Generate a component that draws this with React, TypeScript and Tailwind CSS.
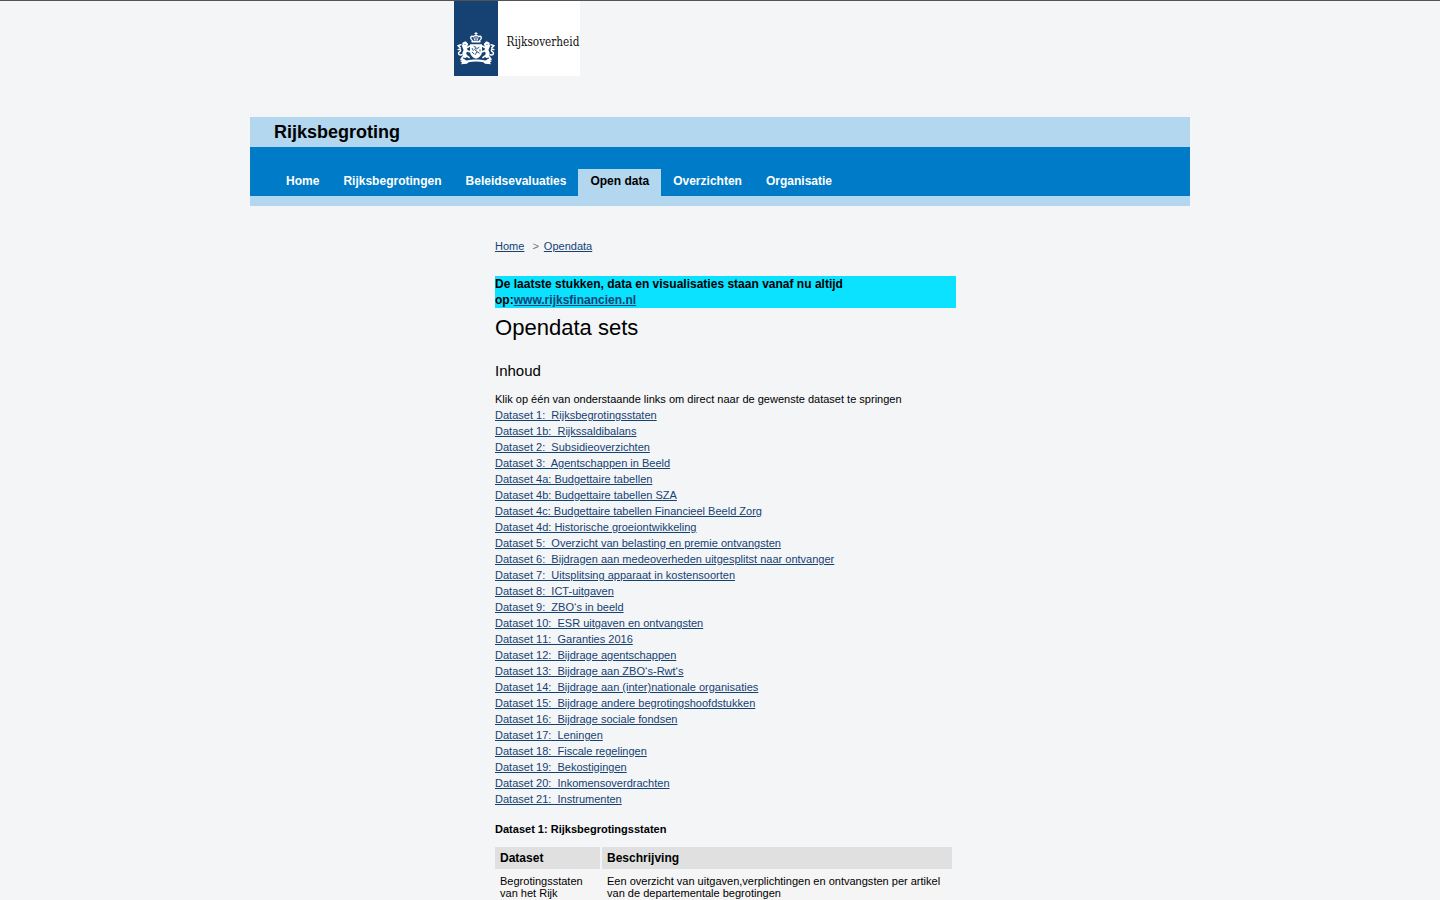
const datasets = [
  'Dataset 1:\u00a0 Rijksbegrotingsstaten',
  'Dataset 1b:\u00a0 Rijkssaldibalans',
  'Dataset 2:\u00a0 Subsidieoverzichten',
  'Dataset 3:\u00a0 Agentschappen in Beeld',
  'Dataset 4a: Budgettaire tabellen',
  'Dataset 4b: Budgettaire tabellen SZA',
  'Dataset 4c: Budgettaire tabellen Financieel Beeld Zorg',
  'Dataset 4d: Historische groeiontwikkeling',
  'Dataset 5:\u00a0 Overzicht van belasting en premie ontvangsten',
  'Dataset 6:\u00a0 Bijdragen aan medeoverheden uitgesplitst naar ontvanger',
  'Dataset 7:\u00a0 Uitsplitsing apparaat in kostensoorten',
  'Dataset 8:\u00a0 ICT-uitgaven',
  'Dataset 9:\u00a0 ZBO\u2018s in beeld',
  'Dataset 10:\u00a0 ESR uitgaven en ontvangsten',
  'Dataset 11:\u00a0 Garanties 2016',
  'Dataset 12:\u00a0 Bijdrage agentschappen',
  'Dataset 13:\u00a0 Bijdrage aan ZBO\u2018s-Rwt\u2018s',
  'Dataset 14:\u00a0 Bijdrage aan (inter)nationale organisaties',
  'Dataset 15:\u00a0 Bijdrage andere begrotingshoofdstukken',
  'Dataset 16:\u00a0 Bijdrage sociale fondsen',
  'Dataset 17:\u00a0 Leningen',
  'Dataset 18:\u00a0 Fiscale regelingen',
  'Dataset 19:\u00a0 Bekostigingen',
  'Dataset 20:\u00a0 Inkomensoverdrachten',
  'Dataset 21:\u00a0 Instrumenten',
];

const tabs = ['Home', 'Rijksbegrotingen', 'Beleidsevaluaties', 'Open data', 'Overzichten', 'Organisatie'];

function Lion() {
  return (
    <g fill="none" stroke="#fff" strokeLinecap="round" strokeLinejoin="round">
      <path d="M9.4 42.4 L11.4 41.4 L13 43.2 L12 45.2 L9 44.6" strokeWidth="2.2" />
      <path d="M10.2 45.6 L11.6 49 L10.2 52.4 L11.2 55" strokeWidth="3.8" />
      <path d="M12 47 L15.4 45.2 M12.4 49.8 L15.6 50.6 M11.8 54.2 L15 56.4" strokeWidth="1.7" />
      <path d="M9.6 55 L7.2 58.2 L10 59" strokeWidth="1.9" />
      <path d="M8 53.8 C3.6 54.6 4 51.4 5.8 50.6 C7.4 49.6 6.4 47.8 4.2 48.6 M6.4 47 L4 44.6 L7 43.8" strokeWidth="1.5" />
    </g>
  );
}

function Logo() {
  return (
    <svg width="126" height="75" viewBox="0 0 126 75" className="block overflow-visible" role="img" aria-label="Rijksoverheid">
      <rect width="126" height="75" fill="#fff" />
      <rect width="44" height="75" fill="#154273" />
      <g fill="none" stroke="#fff" strokeLinecap="round" strokeLinejoin="round">
        <path d="M22 31.4 V34 M20.8 32.6 H23.2" strokeWidth="1" />
        <path d="M18.4 39.6 C15.2 36.4 17 34.6 19.4 35.6 C20.4 34 23.6 34 24.6 35.6 C27 34.6 28.8 36.4 25.6 39.6" strokeWidth="1.3" />
        <path d="M22 35 V39 M20 36.6 L20.6 39 M24 36.6 L23.4 39" strokeWidth="0.9" />
        <path d="M18.2 40.6 H25.8" strokeWidth="1.8" />
      </g>
      <path d="M16 43.2 H28 V50.4 C28 54 25.4 56.4 22 57.8 C18.6 56.4 16 54 16 50.4 Z" fill="#fff" />
      <g fill="none" stroke="#154273" strokeWidth="0.9" strokeLinecap="round">
        <path d="M20 45.4 L22 46.4 L20.6 48.6 L23 50.4 L21.4 53.4 M22.4 48 L25 46.4 M23.4 51 L25.2 52 M18.2 47.4 L19.2 49.4 M18.4 51.4 L20 52.8" />
        <path d="M26 48.8 V50" />
      </g>
      <Lion />
      <g transform="translate(44 0) scale(-1 1)">
        <Lion />
      </g>
      <path
        d="M6 60 L9.8 58.6 L13 59.6 C18 58.2 26 58.2 31 59.6 L34.2 58.6 L38 60 L36 61.4 L37 63.2 L31 62.8 L29.4 61.2 C25 60.4 19 60.4 14.6 61.2 L13 62.8 L7 63.2 L8 61.4 Z"
        fill="#fff"
      />
      <text x="52.6" y="44.6" fontSize="12.2" fill="#111" fontFamily="'DejaVu Serif Condensed', 'DejaVu Serif', serif" textLength="72.8" lengthAdjust="spacingAndGlyphs">
        Rijksoverheid
      </text>
    </svg>
  );
}

function Link({ children }: { children: string }) {
  return (
    <a href="#" className="text-[#154273] underline">
      {children}
    </a>
  );
}

export default function App() {
  return (
    <div className="h-[900px] overflow-hidden border-t border-[#545257] bg-[#f3f5f7] font-['Liberation_Sans',Arial,sans-serif] text-[11.024px] leading-4 text-black">
      <div className="mx-auto w-[940px]">
        <div className="h-[116px] pl-[204px]">
          <Logo />
        </div>
        <header>
          <div className="h-[30px] bg-[#b2d7ee] pl-6 text-lg leading-[30px] font-bold">Rijksbegroting</div>
          <nav className="flex h-[49px] items-end bg-[#007bc7] pl-6 text-[12.032px] font-bold">
            {tabs.map((tab) => (
              <a
                key={tab}
                href="#"
                className={tab === 'Open data' ? 'h-[27px] bg-[#b2d7ee] px-3 leading-6 text-black' : 'h-[27px] px-3 leading-6 text-white'}
              >
                {tab}
              </a>
            ))}
          </nav>
          <div className="h-2.5 bg-[#b2d7ee]" />
        </header>
        <main className="ml-[245px] w-[461px] pt-8">
          <div className="flex">
            <Link>Home</Link>
            <span className="pr-[5px] pl-2 text-[#767676]">&gt;</span>
            <Link>Opendata</Link>
          </div>
          <p className="mt-[22px] bg-[#0ae2ff] text-[12.032px] leading-4 font-bold">
            De laatste stukken, data en visualisaties staan vanaf nu altijd
            <br />
            op:<Link>www.rijksfinancien.nl</Link>
          </p>
          <h1 className="mt-1.5 text-[22.048px] leading-7">Opendata sets</h1>
          <h2 className="mt-[19px] text-[15px] leading-5">Inhoud</h2>
          <p className="mt-2.5">Klik op één van onderstaande links om direct naar de gewenste dataset te springen</p>
          <ul>
            {datasets.map((name) => (
              <li key={name} className={name.startsWith('Dataset 11') ? '[font-kerning:none]' : undefined}>
                <Link>{name}</Link>
              </li>
            ))}
          </ul>
          <h3 className="mt-3.5 font-bold">Dataset 1: Rijksbegrotingsstaten</h3>
          <div className="mt-2.5 grid w-[457px] grid-cols-[105px_350px] gap-x-0.5 gap-y-0.5">
            <div className="h-[22px] bg-[#e0e0e0] px-[5px] text-[12.032px] leading-[22px] font-bold">Dataset</div>
            <div className="h-[22px] bg-[#e0e0e0] px-[5px] text-[12.032px] leading-[22px] font-bold">Beschrijving</div>
            <div className="bg-[#f5f5f5] px-[5px] py-1 leading-3">Begrotingsstaten van het Rijk</div>
            <div className="bg-[#f5f5f5] px-[5px] py-1 leading-3">
              Een overzicht van uitgaven,verplichtingen en ontvangsten per artikel van de departementale begrotingen
            </div>
          </div>
        </main>
      </div>
    </div>
  );
}
